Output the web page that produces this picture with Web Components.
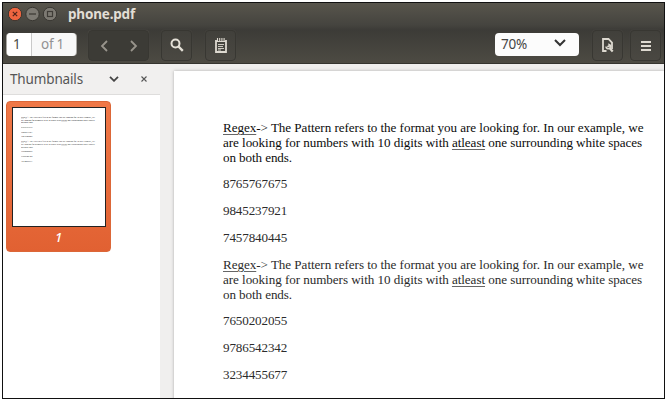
<!DOCTYPE html>
<html lang="en"><head><meta charset="utf-8"><title>phone.pdf</title>
<style>html,body{margin:0;background:#fff;overflow:hidden}body{width:667px;height:401px}</style></head>
<body><pdf-viewer></pdf-viewer>
<script>
const define = (name, html, init) => customElements.define(name, class extends HTMLElement {
  constructor() { super(); this.attachShadow({mode:'open'}).innerHTML = html; }
  connectedCallback() { if (init) init.call(this); }
});

// Text run whose letter spacing is adjusted to fill the width given in "w".
define('fit-text', `<style>:host{display:block;white-space:nowrap}span{display:inline-block;vertical-align:top}::slotted(u){text-decoration-thickness:1px;text-decoration-color:#666;text-underline-offset:2px}</style><span><slot></slot></span>`, function () {
  const s = this.shadowRoot.querySelector('span'), w = +this.getAttribute('w');
  if (w) s.style.letterSpacing = (w - parseFloat(getComputedStyle(s).width)) / this.textContent.length + 'px';
});

define('tool-button', `<style>:host{display:flex;box-sizing:border-box;width:31px;height:31px;border:1px solid #383732;border-radius:4px;background:linear-gradient(#41403b,#4a4842);align-items:center;justify-content:center;box-shadow:0 0 1px #575550}</style><slot></slot>`);

define('window-titlebar', `<style>:host{display:flex;height:24px;align-items:center;box-sizing:border-box;padding:0 0 2px 5px;color:#e2ded5;font:bold 13.5px "Noto Sans","Open Sans",sans-serif}
svg{display:block;margin-right:10px}</style>
<svg width="50" height="16" viewBox="0 0 50 16" fill="none"><circle cx="7" cy="8" r="6.7" fill="#ee6540" stroke="#3a352f"/><path d="M4.8 5.8l4.4 4.4m0-4.4l-4.4 4.4" stroke="#51251a" stroke-width="1.2"/>
<circle cx="24.5" cy="8" r="6.7" fill="#7d7a73" stroke="#393732"/><path d="M21 8h7" stroke="#3f3c37" stroke-width="1.3"/>
<circle cx="42" cy="8" r="6.7" fill="#7d7a73" stroke="#393732"/><rect x="39.5" y="5.5" width="5" height="5" stroke="#3f3c37" stroke-width="1.2"/></svg><fit-text w="67">phone.pdf</fit-text>`);

define('page-entry', `<style>:host{display:flex;box-sizing:border-box;width:69px;height:23px;border-radius:4px;background:#f8f8f8;font:13.5px/23px "Noto Sans",sans-serif;color:#4a4a4a;box-shadow:-1px 0 #aaa8a3,1px 0 #aaa8a3}
.n{box-sizing:border-box;width:25px;padding-left:6px;border-right:1px solid #c9c9c9;background:#fff;border-radius:4px 0 0 4px}.of{padding-left:9px;color:#929292}</style><span class="n">1</span><fit-text class="of" w="23">of 1</fit-text>`);

define('zoom-select', `<style>:host{display:flex;box-sizing:border-box;width:84px;height:23px;border-radius:4px;background:#fcfcfc;padding:0 13px 0 6px;align-items:center;justify-content:space-between;font:13.5px/23px "Noto Sans",sans-serif;color:#444}svg{margin-top:-3px}</style><fit-text w="26">70%</fit-text><svg width="12" height="8" fill="none" stroke="#333" stroke-width="2"><path d="M1 1l5 5 5-5"/></svg>`);

define('viewer-toolbar', `<style>:host{display:flex;height:37px;box-sizing:border-box;padding:3px 3px 0 4px}
page-entry,zoom-select{margin-top:3px}.nav{width:61px;margin-left:12px;background:#3c3b36;gap:22px}.find{margin-left:12px}.notes{margin-left:13px}.sp{flex:1}.set{margin-left:13px}.menu{margin-left:7px}.find svg,.set svg{margin-top:-1px}</style>
<page-entry></page-entry>
<tool-button class="nav"><svg width="8" height="12" fill="none" stroke="#98948c" stroke-width="1.8"><path d="M7 1L2 6l5 5"/></svg><svg width="8" height="12" fill="none" stroke="#98948c" stroke-width="1.8"><path d="M1 1l5 5-5 5"/></svg></tool-button>
<tool-button class="find"><svg width="14" height="14" fill="none" stroke="#e5e1d8"><circle cx="5.5" cy="5.5" r="4" stroke-width="2"/><path d="M8.5 8.5l4.3 4.3" stroke-width="2.4"/></svg></tool-button>
<tool-button class="notes"><svg width="12" height="15" fill="none" stroke="#ddd9d0"><path d="M1 2v12h10V2" stroke-width="1.8"/><path d="M2.5 0v4m2.2-4v4m2.2-4v4m2.2-4v4M1 3.5h10" stroke-width="1.1"/><path d="M3 6.5h6M3 8.5h5M3 10.5h6M3 12h3" stroke-width=".9"/></svg></tool-button>
<span class="sp"></span><zoom-select></zoom-select>
<tool-button class="set"><svg width="13" height="16" fill="none" stroke="#ddd9d0"><path d="M5.5 14H2V2h5.5L11 5.7V12" stroke-width="1.8"/><path d="M5 9.5a2.3 2.3 0 1 0 3-2.2v2.2H6.2" stroke-width="1.4"/><path d="M8.5 11l3.2 3.5" stroke-width="2.2"/></svg></tool-button>
<tool-button class="menu"><svg width="10" height="10" stroke="#ddd9d0" stroke-width="2"><path d="M0 1h10M0 5h10M0 9h10"/></svg></tool-button>`);

const block = (cls, nums) => `<section class="${cls}"><fit-text w="420.5"><u>Regex</u>-&gt; The Pattern refers to the format you are looking for. In our example, we</fit-text><fit-text w="419">are looking for numbers with 10 digits with <u>atleast</u> one surrounding white spaces</fit-text><fit-text w="69">on both ends.</fit-text><div class="nums">${nums.map(n => `<fit-text w="64.2">${n}</fit-text>`).join('')}</div></section>`;
define('document-text', `<style>:host{display:block;width:421px;font:13.1px/15px "Liberation Serif",serif;color:#2b2b2b}
.first{color:#0c0c0c}.nums{display:grid;gap:11.7px;margin-top:11.4px;color:#2b2b2b}section+section{margin-top:12.2px}</style>
${block('first', ['8765767675','9845237921','7457840445'])}${block('second', ['7650202055','9786542342','3234455677'])}`);

define('thumbnail-card', `<style>:host{display:block;box-sizing:border-box;width:105px;height:151px;border:1px solid #dc6738;border-radius:4px;background:linear-gradient(#f07847,#e16132);padding:5px 5px 0;color:#fff;text-align:center;font:italic 500 13px/20px "Noto Sans",sans-serif}
.p{box-sizing:border-box;width:94px;height:120px;border:1px solid #222;background:#fff;padding:8px 0 0 8px;overflow:hidden;text-align:left;font-style:normal;font-weight:400}document-text{transform:scale(.176);transform-origin:0 0}</style><div class="p"><document-text></document-text></div>1`);

define('thumbnail-sidebar', `<style>:host{display:flex;flex-direction:column;width:157px;background:#fff}
header{display:flex;align-items:center;height:31px;box-sizing:border-box;padding:0 13px 0 7px;background:#f1f0ef;border-bottom:1px solid #dedddc;font:13.5px "Noto Sans",sans-serif;color:#555}
fit-text{width:101px}.x{margin-left:22px}thumbnail-card{margin:6px 0 0 3px}</style>
<header><fit-text w="73">Thumbnails</fit-text><svg width="10" height="6" fill="none" stroke="#444" stroke-width="1.8"><path d="M1 .8l4 4 4-4"/></svg><svg class="x" width="6" height="6" stroke="#555" stroke-width="1.1"><path d="M.5 .5l5 5m0-5l-5 5"/></svg></header><thumbnail-card></thumbnail-card>`);

define('document-view', `<style>:host{display:block;flex:1;min-width:0;background:#f0efee;padding:7px 0 0 14px;box-sizing:border-box;overflow:hidden}
.page{background:#fff;height:340px;box-sizing:border-box;padding:49px 0 0 49px;box-shadow:0 0 3px #aaa}</style><div class="page"><document-text></document-text></div>`);

define('pdf-viewer', `<style>:host{display:flex;flex-direction:column;box-sizing:border-box;width:663px;height:397px;margin:2px;border:1px solid #111;background:#f1f0ef;overflow:hidden}
.head{background:linear-gradient(#58554c 0,#45443f 22px,#3c3b37 27px,#4d4b43 60px);height:61px;border-bottom:1px solid #35342f;box-sizing:border-box;flex:none}
main{display:flex;flex:1;min-height:0}</style>
<div class="head"><window-titlebar></window-titlebar><viewer-toolbar></viewer-toolbar></div><main><thumbnail-sidebar></thumbnail-sidebar><document-view></document-view></main>`);
</script></body></html>
